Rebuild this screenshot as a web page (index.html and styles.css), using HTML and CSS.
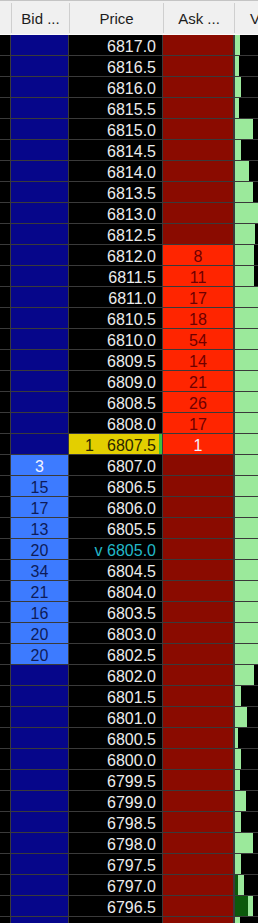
FILE: index.html
```html
<!DOCTYPE html>
<html>
<head>
<meta charset="utf-8">
<link rel="stylesheet" href="styles.css">
</head>
<body>
<div class="ladder">
  <div class="head">
    <div class="hc"></div>
    <div class="hc">Bid ...</div>
    <div class="hc">Price</div>
    <div class="hc">Ask ...</div>
    <div class="hc hv">V</div>
  </div>
  <div class="rows">
    <div class="row"><div class="c0"></div><div class="bid"></div><div class="px">6817.0</div><div class="ask"></div><div class="vol"><span class="bar" style="width:5px"></span></div></div>
    <div class="row"><div class="c0"></div><div class="bid"></div><div class="px">6816.5</div><div class="ask"></div><div class="vol"><span class="bar" style="width:4px"></span></div></div>
    <div class="row"><div class="c0"></div><div class="bid"></div><div class="px">6816.0</div><div class="ask"></div><div class="vol"><span class="bar" style="width:6px"></span></div></div>
    <div class="row"><div class="c0"></div><div class="bid"></div><div class="px">6815.5</div><div class="ask"></div><div class="vol"><span class="bar" style="width:4px"></span></div></div>
    <div class="row"><div class="c0"></div><div class="bid"></div><div class="px">6815.0</div><div class="ask"></div><div class="vol"><span class="bar" style="width:18px"></span></div></div>
    <div class="row"><div class="c0"></div><div class="bid"></div><div class="px">6814.5</div><div class="ask"></div><div class="vol"><span class="bar" style="width:6px"></span></div></div>
    <div class="row"><div class="c0"></div><div class="bid"></div><div class="px">6814.0</div><div class="ask"></div><div class="vol"><span class="bar" style="width:14px"></span></div></div>
    <div class="row"><div class="c0"></div><div class="bid"></div><div class="px">6813.5</div><div class="ask"></div><div class="vol"><span class="bar" style="width:18px"></span></div></div>
    <div class="row"><div class="c0"></div><div class="bid"></div><div class="px">6813.0</div><div class="ask"></div><div class="vol"><span class="bar" style="width:30px"></span></div></div>
    <div class="row"><div class="c0"></div><div class="bid"></div><div class="px">6812.5</div><div class="ask"></div><div class="vol"><span class="bar" style="width:20px"></span></div></div>
    <div class="row"><div class="c0"></div><div class="bid"></div><div class="px">6812.0</div><div class="ask on">8</div><div class="vol"><span class="bar" style="width:19px"></span></div></div>
    <div class="row"><div class="c0"></div><div class="bid"></div><div class="px">6811.5</div><div class="ask on">11</div><div class="vol"><span class="bar" style="width:19px"></span></div></div>
    <div class="row"><div class="c0"></div><div class="bid"></div><div class="px">6811.0</div><div class="ask on">17</div><div class="vol"><span class="bar" style="width:30px"></span></div></div>
    <div class="row"><div class="c0"></div><div class="bid"></div><div class="px">6810.5</div><div class="ask on">18</div><div class="vol"><span class="bar" style="width:30px"></span></div></div>
    <div class="row"><div class="c0"></div><div class="bid"></div><div class="px">6810.0</div><div class="ask on">54</div><div class="vol"><span class="bar" style="width:30px"></span></div></div>
    <div class="row"><div class="c0"></div><div class="bid"></div><div class="px">6809.5</div><div class="ask on">14</div><div class="vol"><span class="bar" style="width:30px"></span></div></div>
    <div class="row"><div class="c0"></div><div class="bid"></div><div class="px">6809.0</div><div class="ask on">21</div><div class="vol"><span class="bar" style="width:30px"></span></div></div>
    <div class="row"><div class="c0"></div><div class="bid"></div><div class="px">6808.5</div><div class="ask on">26</div><div class="vol"><span class="bar" style="width:30px"></span></div></div>
    <div class="row"><div class="c0"></div><div class="bid"></div><div class="px">6808.0</div><div class="ask on">17</div><div class="vol"><span class="bar" style="width:30px"></span></div></div>
    <div class="row"><div class="c0"></div><div class="bid"></div><div class="px last"><span class="lq">1</span><span>6807.5</span></div><div class="ask on hi">1</div><div class="vol"><span class="bar" style="width:30px"></span></div></div>
    <div class="row"><div class="c0"></div><div class="bid on hi">3</div><div class="px">6807.0</div><div class="ask"></div><div class="vol"><span class="bar" style="width:30px"></span></div></div>
    <div class="row"><div class="c0"></div><div class="bid on">15</div><div class="px">6806.5</div><div class="ask"></div><div class="vol"><span class="bar" style="width:30px"></span></div></div>
    <div class="row"><div class="c0"></div><div class="bid on">17</div><div class="px">6806.0</div><div class="ask"></div><div class="vol"><span class="bar" style="width:30px"></span></div></div>
    <div class="row"><div class="c0"></div><div class="bid on">13</div><div class="px">6805.5</div><div class="ask"></div><div class="vol"><span class="bar" style="width:30px"></span></div></div>
    <div class="row"><div class="c0"></div><div class="bid on">20</div><div class="px mark">v 6805.0</div><div class="ask"></div><div class="vol"><span class="bar" style="width:30px"></span></div></div>
    <div class="row"><div class="c0"></div><div class="bid on">34</div><div class="px">6804.5</div><div class="ask"></div><div class="vol"><span class="bar" style="width:30px"></span></div></div>
    <div class="row"><div class="c0"></div><div class="bid on">21</div><div class="px">6804.0</div><div class="ask"></div><div class="vol"><span class="bar" style="width:30px"></span></div></div>
    <div class="row"><div class="c0"></div><div class="bid on">16</div><div class="px">6803.5</div><div class="ask"></div><div class="vol"><span class="bar" style="width:30px"></span></div></div>
    <div class="row"><div class="c0"></div><div class="bid on">20</div><div class="px">6803.0</div><div class="ask"></div><div class="vol"><span class="bar" style="width:30px"></span></div></div>
    <div class="row"><div class="c0"></div><div class="bid on">20</div><div class="px">6802.5</div><div class="ask"></div><div class="vol"><span class="bar" style="width:30px"></span></div></div>
    <div class="row"><div class="c0"></div><div class="bid"></div><div class="px">6802.0</div><div class="ask"></div><div class="vol"><span class="bar" style="width:19px"></span></div></div>
    <div class="row"><div class="c0"></div><div class="bid"></div><div class="px">6801.5</div><div class="ask"></div><div class="vol"><span class="bar" style="width:6px"></span></div></div>
    <div class="row"><div class="c0"></div><div class="bid"></div><div class="px">6801.0</div><div class="ask"></div><div class="vol"><span class="bar" style="width:12px"></span></div></div>
    <div class="row"><div class="c0"></div><div class="bid"></div><div class="px">6800.5</div><div class="ask"></div><div class="vol"><span class="bar" style="width:3px"></span></div></div>
    <div class="row"><div class="c0"></div><div class="bid"></div><div class="px">6800.0</div><div class="ask"></div><div class="vol"><span class="bar" style="width:6px"></span></div></div>
    <div class="row"><div class="c0"></div><div class="bid"></div><div class="px">6799.5</div><div class="ask"></div><div class="vol"><span class="bar" style="width:5px"></span></div></div>
    <div class="row"><div class="c0"></div><div class="bid"></div><div class="px">6799.0</div><div class="ask"></div><div class="vol"><span class="bar" style="width:11px"></span></div></div>
    <div class="row"><div class="c0"></div><div class="bid"></div><div class="px">6798.5</div><div class="ask"></div><div class="vol"><span class="bar" style="width:6px"></span></div></div>
    <div class="row"><div class="c0"></div><div class="bid"></div><div class="px">6798.0</div><div class="ask"></div><div class="vol"><span class="bar" style="width:18px"></span></div></div>
    <div class="row"><div class="c0"></div><div class="bid"></div><div class="px">6797.5</div><div class="ask"></div><div class="vol"><span class="bar" style="width:6px"></span></div></div>
    <div class="row"><div class="c0"></div><div class="bid"></div><div class="px">6797.0</div><div class="ask"></div><div class="vol"><span class="bar dark" style="width:3px"></span><span class="bar" style="width:6px"></span></div></div>
    <div class="row"><div class="c0"></div><div class="bid"></div><div class="px">6796.5</div><div class="ask"></div><div class="vol"><span class="bar dark" style="width:13px"></span><span class="bar" style="width:5px"></span></div></div>
    <div class="row"><div class="c0"></div><div class="bid"></div><div class="px"></div><div class="ask"></div><div class="vol"><span class="bar" style="width:5px"></span></div></div>
  </div>
</div>
</body>
</html>
```

FILE: styles.css
```css
html, body {
  margin: 0;
  padding: 0;
  background: #000;
}
body {
  width: 258px;
  height: 923px;
  overflow: hidden;
  font-family: "Liberation Sans", Arial, sans-serif;
}
.ladder {
  width: 258px;
}
.head {
  display: grid;
  grid-template-columns: 11px 58px 94px 71px 1fr;
  height: 35px;
  box-sizing: border-box;
  background: #f0f0f0;
  border-top: 1px solid #c4c4c4;
  border-bottom: 1px solid #fbfbfb;
}
.hc {
  border-left: 1px solid #cfcfcf;
  margin: 2px 0 1px;
  font-size: 15px;
  color: #1c1c1c;
  text-align: center;
  line-height: 30px;
  padding-top: 1px;
  white-space: nowrap;
  overflow: hidden;
}
.hc:first-child {
  border-left: none;
}
.hv {
  text-align: left;
  padding-left: 15px;
}
.rows {
  display: flex;
  flex-direction: column;
  gap: 1px;
  background: #3a3a3a;
}
.row {
  display: grid;
  grid-template-columns: 10px 57px 93px 70px 1fr;
  column-gap: 1px;
  height: 20px;
  flex: none;
  font-size: 16px;
  line-height: 20px;
}
.row > div {
  box-sizing: border-box;
  padding-top: 2px;
  overflow: hidden;
  white-space: nowrap;
}
.c0 {
  background: #000;
}
.bid {
  background: #06068a;
  text-align: center;
  color: #0d1b5a;
}
.bid.on {
  background: #3d7bff;
}
.bid.hi,
.ask.hi {
  color: #f2f2ff;
}
.px {
  background: #000;
  color: #ececec;
  text-align: right;
  padding-right: 6px;
}
.px.mark {
  color: #22b8c8;
}
.px.last {
  background: #e3cf00;
  color: #2a2600;
  display: flex;
  justify-content: space-between;
  padding-left: 16px;
  border-right: 3px solid #3ec23e;
  padding-right: 3px;
}
.ask {
  background: #8a0b00;
  text-align: center;
  color: #6e0000;
}
.ask.on {
  background: #ff2500;
}
.vol {
  background: #000;
  margin-left: 1px;
  display: flex;
  padding-top: 0 !important;
}
.bar {
  display: block;
  height: 20px;
  flex: none;
  background: #9be99b;
}
.bar.dark {
  background: #0c5a0c;
}
```
